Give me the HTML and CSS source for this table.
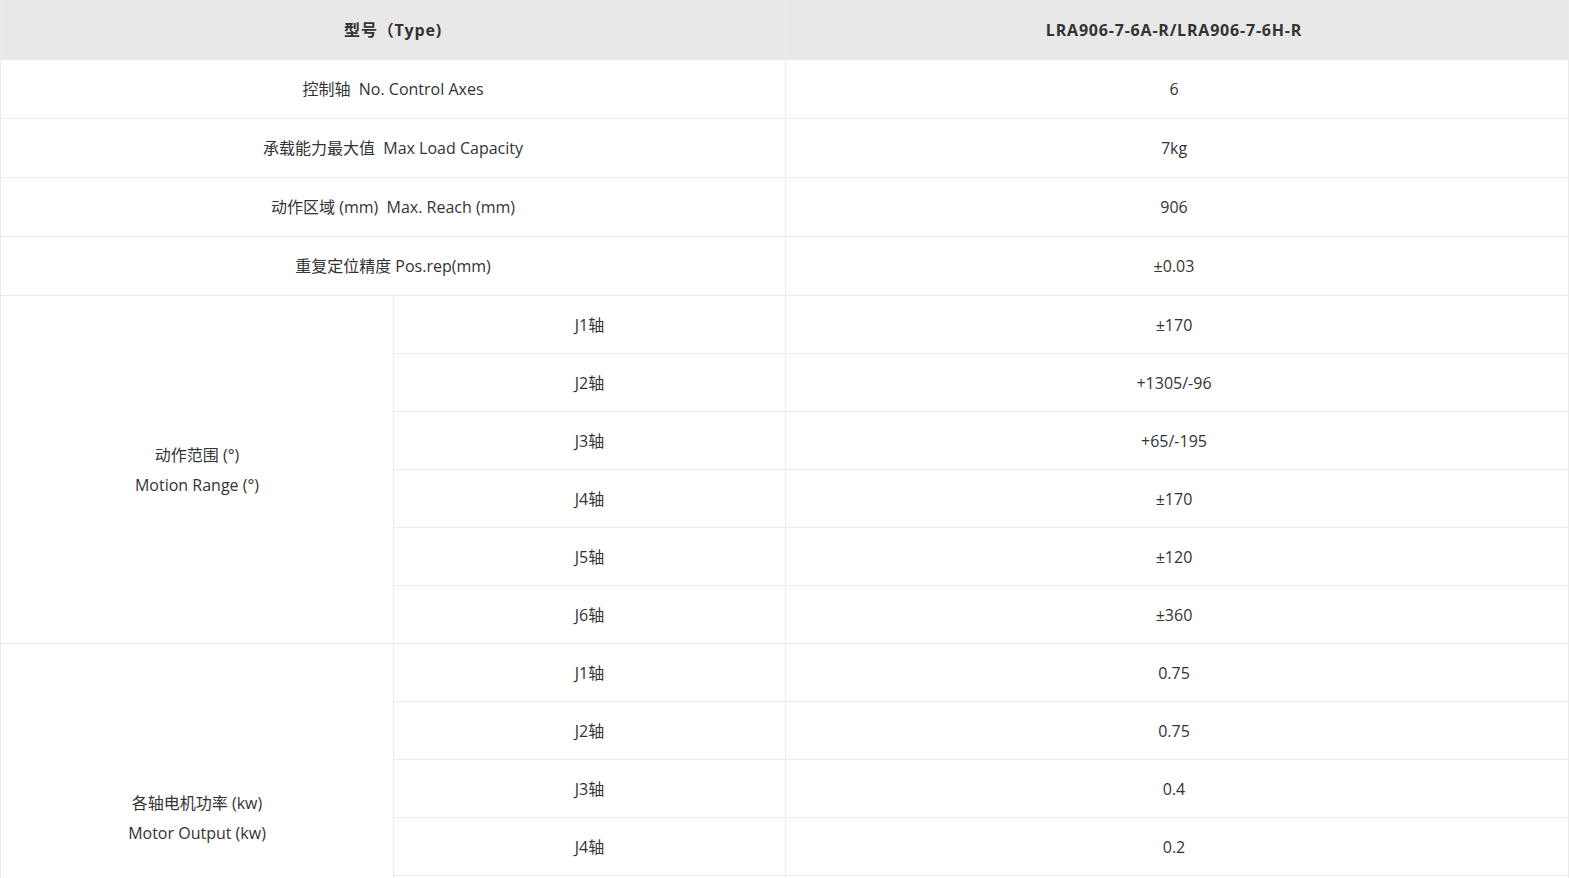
FILE: index.html
```html
<!DOCTYPE html>
<html lang="zh-CN">
<head>
<meta charset="utf-8">
<title>参数</title>
<link rel="stylesheet" href="styles.css">
</head>
<body>
<table class="spec">
  <colgroup><col class="c1"><col class="c2"><col class="c3"></colgroup>
  <tr class="head"><th colspan="2">型号（Type)</th><th>LRA906-7-6A-R/LRA906-7-6H-R</th></tr>
  <tr class="row"><td colspan="2">控制轴&nbsp;&nbsp;No. Control Axes</td><td>6</td></tr>
  <tr class="row"><td colspan="2">承载能力最大值&nbsp;&nbsp;Max Load Capacity</td><td>7kg</td></tr>
  <tr class="row"><td colspan="2">动作区域 (mm)&nbsp;&nbsp;Max. Reach (mm)</td><td>906</td></tr>
  <tr class="row"><td colspan="2">重复定位精度 Pos.rep(mm)</td><td>±0.03</td></tr>
  <tr class="sub"><td rowspan="6" class="group">动作范围 (°)<br>Motion Range (°)</td><td>J1轴</td><td>±170</td></tr>
  <tr class="sub"><td>J2轴</td><td>+1305/-96</td></tr>
  <tr class="sub"><td>J3轴</td><td>+65/-195</td></tr>
  <tr class="sub"><td>J4轴</td><td>±170</td></tr>
  <tr class="sub"><td>J5轴</td><td>±120</td></tr>
  <tr class="sub"><td>J6轴</td><td>±360</td></tr>
  <tr class="sub"><td rowspan="6" class="group">各轴电机功率 (kw)<br>Motor Output (kw)</td><td>J1轴</td><td>0.75</td></tr>
  <tr class="sub"><td>J2轴</td><td>0.75</td></tr>
  <tr class="sub"><td>J3轴</td><td>0.4</td></tr>
  <tr class="sub"><td>J4轴</td><td>0.2</td></tr>
  <tr class="sub"><td>J5轴</td><td>0.2</td></tr>
  <tr class="sub"><td>J6轴</td><td>0.2</td></tr>
</table>
</body>
</html>
```
FILE: styles.css
```css
html, body {
  margin: 0;
  padding: 0;
  background: #fff;
}
.spec {
  width: 1569px;
  border-collapse: collapse;
  table-layout: fixed;
  font-family: "Open Sans", "Noto Sans CJK SC", sans-serif;
  font-size: 16px;
  color: #333;
}
.c1 { width: 393px; }
.c2 { width: 392px; }
.spec th, .spec td {
  border: 1px solid #ebebeb;
  text-align: center;
  vertical-align: middle;
  padding: 0;
  line-height: 30px;
}
.spec .c3 { width: auto; }
.spec tr > :last-child { padding-right: 6px; }
.head th {
  background: #e8e8e8;
  font-weight: bold;
  letter-spacing: 0.8px;
  height: 58px;
}
.row td { height: 58px; }
.sub td { height: 57px; }
```
